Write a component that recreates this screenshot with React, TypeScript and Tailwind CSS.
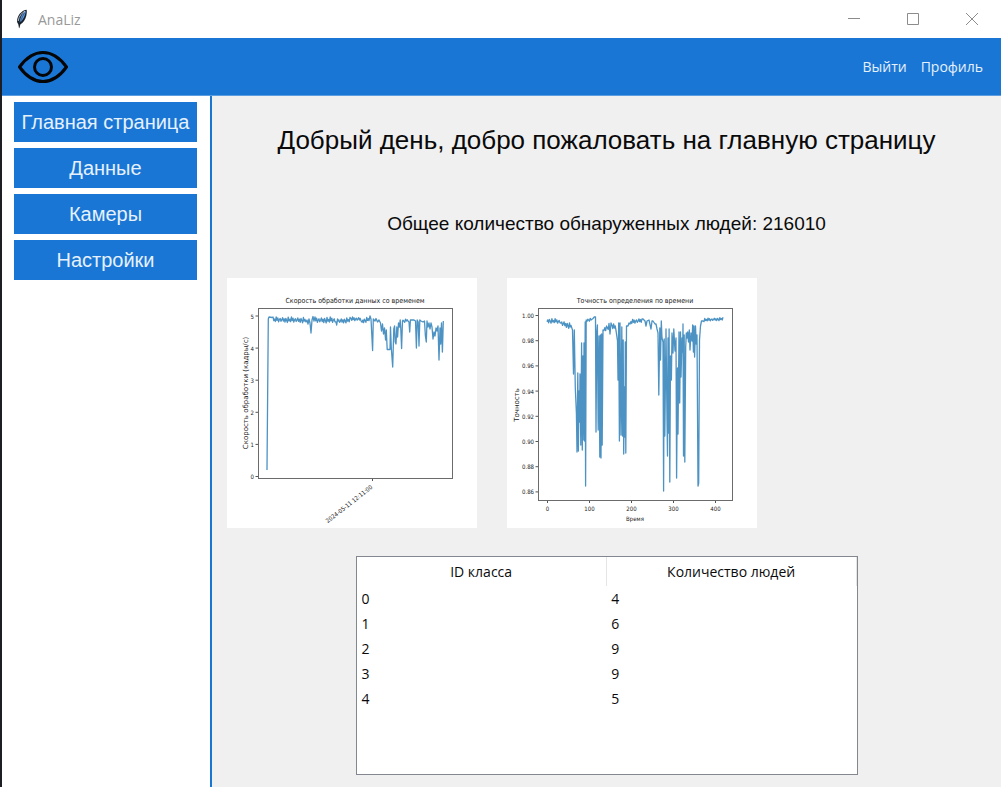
import React from 'react';

type Point = [number, number];

const NAV_ITEMS = ['Главная страница', 'Данные', 'Камеры', 'Настройки'];

const ROWS = [
  { id: 0, count: 4 },
  { id: 1, count: 6 },
  { id: 2, count: 9 },
  { id: 3, count: 9 },
  { id: 4, count: 5 },
];

const JITTER = [0.1, -0.7, 0.5, -0.3, 0.9, -0.5, 0.2, 1, -0.9, 0.4, -0.2, 0.7, -1, 0.3, -0.6, 0.8, 0, -0.4, 0.6];

// A wavering stretch of the line between two points.
function wave(x0: number, y0: number, x1: number, y1: number, amp: number): Point[] {
  const steps = Math.round((x1 - x0) / 0.8);
  return Array.from({ length: steps + 1 }, (_, i): Point => {
    const t = i / steps;
    return [x0 + (x1 - x0) * t, y0 + (y1 - y0) * t + amp * JITTER[(i + Math.round(x0)) % JITTER.length]];
  });
}

const toPoints = (points: Point[]) => points.map(([x, y]) => `${x.toFixed(1)},${y.toFixed(1)}`).join(' ');

const SPEED: Point[] = [
  [40, 192], [41.3, 41], [42, 39], [45, 39.5],
  ...wave(46, 41.5, 78, 42, 2.8),
  [79, 44], [80, 42], [81, 46], [82, 41], [83, 45], [84, 55], [85, 42], [86, 38.5], [87, 43],
  ...wave(88, 42, 108, 42, 3),
  [109, 44], [109.7, 47], [110.5, 41],
  ...wave(111, 43, 123, 42, 2.6),
  ...wave(124, 41, 134, 41, 2),
  ...wave(135, 43, 142, 41, 2.4),
  [143, 38], [144, 41], [145.6, 72.5], [146.3, 41], [148, 43], [149, 40.5], [150.5, 44], [152, 42], [153.5, 45],
  [154.5, 53], [155.5, 46], [156.5, 56], [157.5, 50], [158.6, 62], [159.3, 52], [160.2, 71.5], [163, 71.5],
  [163.5, 49], [164.3, 70], [165.7, 89], [166.8, 51], [167.6, 48], [168.2, 64], [169, 66], [169.8, 49],
  [170.6, 59], [171.5, 45], [172.5, 49], [173.2, 42], [173.8, 51], [174.6, 70.5], [175.5, 43],
  ...wave(176, 43, 181, 42, 1.6),
  [182, 44], [182.7, 54], [183.4, 42], [187, 42], [188.5, 43], [189.4, 70], [190.2, 42], [191.2, 44],
  [192, 68], [192.8, 42], [194, 43], [196, 44], [197.5, 43], [198.4, 58], [199.3, 64], [200, 43], [201, 49],
  [202, 45], [203, 51], [204, 45], [205, 49], [206, 61], [207, 54], [208, 58], [209, 50], [210, 53],
  [211, 48], [212, 82], [213, 50], [213.7, 66], [214.5, 45], [215.4, 74], [216.3, 43],
];

const ACCURACY: Point[] = [
  ...wave(40, 42.5, 53, 43.5, 2.4),
  ...wave(54, 45, 64, 48, 3),
  [65.5, 52], [66.5, 96], [67.3, 52], [68.3, 110], [69.4, 135], [70, 174], [70.8, 95], [71.4, 173],
  [72, 113], [72.7, 144], [73, 96], [73.8, 167], [74.6, 65], [75.3, 172], [76, 78], [76.8, 162],
  [77, 65], [77.6, 163], [78.2, 44], [78.6, 208], [79.2, 42],
  ...wave(80, 42, 84, 41.5, 1.5),
  [86, 40.5], [87.5, 38.8], [88.5, 38.8], [89, 154], [89.8, 54], [90.4, 47], [91.2, 152], [92, 58],
  [92.8, 179], [93.4, 57], [94, 180], [94.7, 56], [95.2, 167], [96, 52],
  ...wave(97, 51, 102, 48, 3),
  [103, 56], [104, 45], ...wave(105, 48, 109, 50, 3),
  [110.5, 63], [111, 102], [111.7, 45], [112.4, 163], [113, 45], [114, 157], [114.8, 49], [115.5, 158],
  [116.2, 62], [116.7, 176], [117.4, 109], [118, 159], [118.3, 64], [118.8, 175], [119.5, 48],
  [121, 48], [122, 45], [123, 46],
  ...wave(124, 44, 135, 42, 2.4),
  [136, 41], [138, 43], [139, 48], [140, 43], [142, 42], [144, 51], [145, 43], [146, 43], [148, 46],
  [149, 46], [150, 51], [151, 55], [151.8, 117], [152.8, 50], [153.5, 82], [154.3, 43], [155, 60],
  [156, 64], [156.6, 213], [157.2, 61], [157.8, 158], [159, 51], [160, 141], [160.5, 178], [161, 60],
  [161.7, 155], [162.1, 51], [162.8, 204], [163.5, 78], [164.4, 102], [165, 55], [166, 75], [166.8, 51],
  [168, 73], [169, 60], [169.6, 200], [170.5, 90], [171, 156], [172, 54], [172.7, 125], [173.5, 54],
  [174, 99], [175, 60], [175.7, 74], [176, 46], [176.5, 178], [177.2, 57], [177.8, 184], [178.7, 69],
  [179.3, 55], [180, 60], [180.7, 54], [181.5, 64], [182.3, 52], [183, 72], [184, 55], [185, 63],
  [185.7, 47], [186.4, 74], [187, 48], [187.6, 79], [188.5, 48], [189.2, 66], [190, 57], [191, 208],
  [191.7, 205], [192.5, 62], [193.5, 48], [194.5, 43], [196, 43],
  ...wave(197, 42, 216, 40.8, 1.6),
];

function Frame({ bottom }: { bottom: number }) {
  return <rect x="31.5" y="30.5" width="194" height={bottom - 30.5} fill="none" stroke="#6b6b6b" strokeWidth="1" />;
}

function SpeedChart() {
  return (
    <svg viewBox="0 0 250 250" className="block h-[250px] w-[250px] bg-white" role="img" aria-label="Скорость обработки данных со временем">
      <g className="font-['DejaVu_Sans_Condensed','DejaVu_Sans',sans-serif]" fill="#222">
        <text x="128" y="25" textAnchor="middle" fontSize="7">Скорость обработки данных со временем</text>
        {[5, 4, 3, 2, 1, 0].map((v, i) => (
          <g key={v}>
            <path d={`M28.5 ${38 + i * 32.1}H31.5`} stroke="#555" strokeWidth="1" />
            <text x="27" y={40.5 + i * 32.1} textAnchor="end" fontSize="6">{v}</text>
          </g>
        ))}
        <path d="M145.5 200.5V203" stroke="#555" strokeWidth="1" />
        <text transform="translate(146 210) rotate(-38)" textAnchor="end" fontSize="6">2024-05-11 12:11:00</text>
      </g>
      <text transform="translate(21 115) rotate(-90)" textAnchor="middle" fontSize="7" fill="#222" className="font-['DejaVu_Sans',sans-serif]">
        Скорость обработки (кадры/с)
      </text>
      <polyline points={toPoints(SPEED)} fill="none" stroke="#1f77b4" strokeOpacity="0.8" strokeWidth="1.3" strokeLinejoin="round" />
      <Frame bottom={200.5} />
    </svg>
  );
}

function AccuracyChart() {
  return (
    <svg viewBox="0 0 250 250" className="block h-[250px] w-[250px] bg-white" role="img" aria-label="Точность определения по времени">
      <g className="font-['DejaVu_Sans_Condensed','DejaVu_Sans',sans-serif]" fill="#222">
        <text x="128" y="25" textAnchor="middle" fontSize="7">Точность определения по времени</text>
        {['1.00', '0.98', '0.96', '0.94', '0.92', '0.90', '0.88', '0.86'].map((v, i) => (
          <g key={v}>
            <path d={`M28.5 ${37.5 + i * 25.2}H31.5`} stroke="#555" strokeWidth="1" />
            <text x="27" y={40 + i * 25.2} textAnchor="end" fontSize="6">{v}</text>
          </g>
        ))}
        {[0, 100, 200, 300, 400].map((v, i) => (
          <g key={v}>
            <path d={`M${40.5 + i * 42} 222.5V225`} stroke="#555" strokeWidth="1" />
            <text x={40.5 + i * 42} y="233" textAnchor="middle" fontSize="6">{v}</text>
          </g>
        ))}
        <text x="128" y="243" textAnchor="middle" fontSize="6">Время</text>
      </g>
      <text transform="translate(12 127) rotate(-90)" textAnchor="middle" fontSize="7" fill="#222" className="font-['DejaVu_Sans',sans-serif]">
        Точность
      </text>
      <polyline points={toPoints(ACCURACY)} fill="none" stroke="#1f77b4" strokeOpacity="0.8" strokeWidth="1.3" strokeLinejoin="round" />
      <Frame bottom={222.5} />
    </svg>
  );
}

function Feather() {
  return (
    <svg viewBox="0 0 12 20" className="h-5 w-3" aria-hidden="true">
      <path d="M10.6 .8C7 1.200 2.800 4.500 1.400 9.500c-.6 2.400-.4 4.300.8 5.600l1 4.300 1-4c3-1.400 5.200-4.800 6.100-8.600.5-2.400.7-4.500.3-6z" fill="#17202b" />
      <path d="M9.900 1.800C6.500 4 4.300 8 3.600 13.500c2.600-1.600 4.300-4.600 5.300-7.600.6-1.700.9-3 1-4.100z" fill="#5b9be6" />
      <path d="M9 2.200C5.600 3.900 3 7 2.200 12" fill="none" stroke="#b9c2cb" strokeWidth="1" />
      <path d="M8.500 4C5.800 8.500 4.200 12.500 3.200 18.500" fill="none" stroke="#17202b" strokeWidth=".5" />
    </svg>
  );
}

export default function App() {
  return (
    <div className="flex min-h-screen bg-white">
      <div className="w-0.5 shrink-0 bg-[#1d1d24]" />
      <div className="flex min-w-0 flex-1 flex-col">
        <div className="flex h-[38px] items-center justify-between bg-white pl-3.5 text-[#999]">
          <div className="flex items-center gap-2.5">
            <Feather />
            <span className="font-['Open_Sans','Noto_Sans',sans-serif] text-[14px]">AnaLiz</span>
          </div>
          <div className="flex h-full">
            <button aria-label="Свернуть" className="flex w-[58px] items-center justify-center">
              <svg viewBox="0 0 12 12" className="size-3" stroke="#8c8c8c" fill="none"><path d="M0 5.500H12" /></svg>
            </button>
            <button aria-label="Развернуть" className="flex w-[59px] items-center justify-center">
              <svg viewBox="0 0 12 12" className="size-3" stroke="#8c8c8c" fill="none"><path d="M.5 .5H11.500V11.500H.5z" /></svg>
            </button>
            <button aria-label="Закрыть" className="flex w-[59px] items-center justify-center">
              <svg viewBox="0 0 12 12" className="size-3" stroke="#8c8c8c" fill="none"><path d="M0 0L12 12M12 0L0 12" /></svg>
            </button>
          </div>
        </div>

        <header className="flex h-[58px] items-center justify-between border-b border-[#5b9de0] bg-[#1976d5] pr-[18px] pl-4">
          <svg viewBox="0 0 50 34" className="h-[34px] w-[50px]" fill="none" stroke="#050505" strokeWidth="3" aria-label="AnaLiz" role="img">
            <path d="M1.500 17C8 8 16 2.500 25 2.500S42 8 48.500 17C42 26 34 31.500 25 31.500S8 26 1.500 17z" strokeLinejoin="round" />
            <circle cx="25" cy="17" r="8.500" />
          </svg>
          <nav className="flex gap-3.5 font-['Open_Sans','Noto_Sans',sans-serif] text-[14px] text-[#e6f1fc]">
            <a href="#logout">Выйти</a>
            <a href="#profile">Профиль</a>
          </nav>
        </header>

        <div className="flex flex-1">
          <nav className="flex w-[210px] shrink-0 flex-col gap-1.5 border-r-2 border-[#1976d5] bg-white pt-1.5 pr-[13px] pl-3">
            {NAV_ITEMS.map((item) => (
              <button
                key={item}
                className="h-10 bg-[#1976d5] font-['Liberation_Sans',Arial,sans-serif] text-[20px] whitespace-nowrap text-[#e6f1fc]"
              >
                {item}
              </button>
            ))}
          </nav>

          <main className="min-w-0 flex-1 bg-[#f0f0f0] px-[15px] pt-6 pb-3 font-['Liberation_Sans',Arial,sans-serif] text-[#0a0a0a]">
            <h1 className="text-center text-[26px] leading-10">Добрый день, добро пожаловать на главную страницу</h1>
            <p className="mt-12 text-center text-[19px] leading-8">Общее количество обнаруженных людей: 216010</p>
            <div className="mt-[38px] flex gap-[30px]">
              <SpeedChart />
              <AccuracyChart />
            </div>
            <div className="mx-auto mt-7 min-h-[219px] max-w-[502px] border border-[#828790] bg-white font-['Open_Sans','Noto_Sans',sans-serif] text-[14px]">
              <table className="w-full table-fixed border-collapse">
                <thead>
                  <tr className="h-[29px]">
                    <th className="border-r border-[#e5e5e5] p-0 text-center font-normal">ID класса</th>
                    <th className="border-r border-[#e5e5e5] p-0 text-center font-normal">Количество людей</th>
                  </tr>
                </thead>
                <tbody>
                  {ROWS.map((row) => (
                    <tr key={row.id} className="h-[25px]">
                      <td className="px-[5px] py-0">{row.id}</td>
                      <td className="px-[5px] py-0">{row.count}</td>
                    </tr>
                  ))}
                </tbody>
              </table>
            </div>
          </main>
        </div>
      </div>
    </div>
  );
}
